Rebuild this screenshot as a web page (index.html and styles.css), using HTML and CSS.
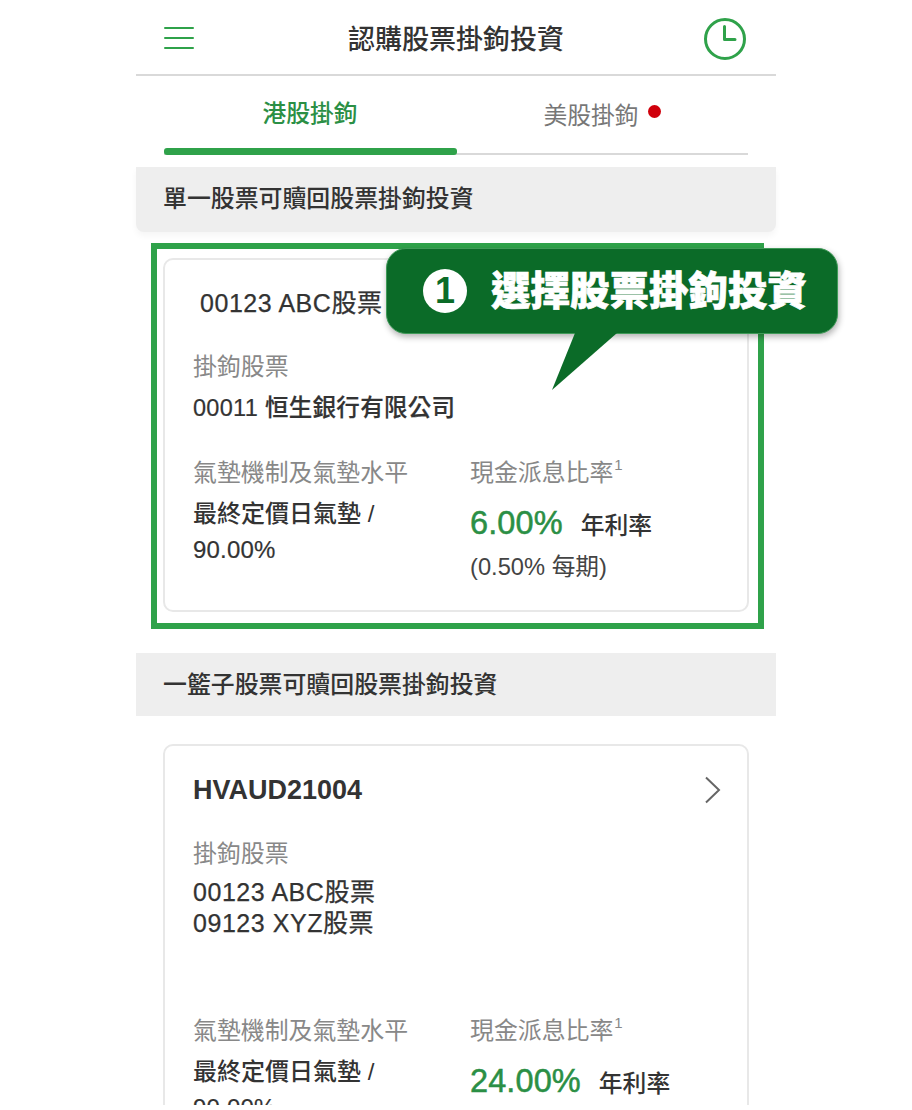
FILE: index.html
```html
<!DOCTYPE html>
<html lang="zh-Hant">
<head>
<meta charset="utf-8">
<title>認購股票掛鉤投資</title>
<link rel="stylesheet" href="styles.css">
</head>
<body>
<div class="viewport">
<div class="app">
  <header class="topbar">
    <div class="menu"><span></span><span></span><span></span></div>
    <h1 class="title">認購股票掛鉤投資</h1>
    <svg class="clock" width="44" height="44" viewBox="0 0 44 44" fill="none" stroke="#2fa24a" stroke-width="3"><circle cx="22" cy="22" r="19.500"/><path d="M21.500 9.500V22.500H32" stroke-linecap="round" stroke-linejoin="round"/></svg>
  </header>
  <nav class="tabs">
    <div class="tab active">港股掛鉤</div>
    <div class="tab"><span class="tab-text">美股掛鉤</span><i class="dot"></i></div>
  </nav>
  <div class="tabline"><div class="tabline-on"></div></div>

  <h2 class="section first">單一股票可贖回股票掛鉤投資</h2>
  <div class="frame">
    <article class="card">
      <div class="code inset">00123 ABC股票</div>
      <div class="label gap-a">掛鉤股票</div>
      <div class="value gap-b">00011 恒生銀行有限公司</div>
      <div class="row gap-c">
        <div class="col-l">
          <div class="label">氣墊機制及氣墊水平</div>
          <div class="kind">最終定價日氣墊 /<br><span class="plain">90.00%</span></div>
        </div>
        <div class="col-r">
          <div class="label">現金派息比率<sup>1</sup></div>
          <div class="rate"><b>6.00%</b><span>年利率</span></div>
          <div class="note">(0.50% 每期)</div>
        </div>
      </div>
    </article>
  </div>

  <h2 class="section">一籃子股票可贖回股票掛鉤投資</h2>
  <article class="card second">
    <div class="head">
      <div class="strong">HVAUD21004</div>
      <svg class="chev" width="18" height="28" viewBox="0 0 18 28" fill="none" stroke="#666" stroke-width="2"><path d="M2 1.500 15 14 2 26.500"/></svg>
    </div>
    <div class="label gap-a2">掛鉤股票</div>
    <div class="code gap-b2">00123 ABC股票<br>09123 XYZ股票</div>
    <div class="row gap-d">
      <div class="col-l">
        <div class="label">氣墊機制及氣墊水平</div>
        <div class="kind">最終定價日氣墊 /<br><span class="plain">90.00%</span></div>
      </div>
      <div class="col-r">
        <div class="label">現金派息比率<sup>1</sup></div>
        <div class="rate"><b>24.00%</b><span>年利率</span></div>
      </div>
    </div>
  </article>

  <aside class="callout">
    <span class="num">1</span>
    <span class="callout-text">選擇股票掛鉤投資</span>
    <svg class="tail" width="70" height="60" viewBox="0 0 70 60"><path d="M24 0H66L1 57Z" fill="#0b6b28"/></svg>
  </aside>
</div>
</div>
</body>
</html>
```
FILE: styles.css
```css
* { box-sizing: border-box; }
html, body { margin: 0; padding: 0; background: #fff; }
body {
  font-family: "Liberation Sans", "Noto Sans CJK TC", sans-serif;
  color: #333;
}
.viewport {
  height: 1105px;
  overflow: hidden;
  padding-left: 136px;
}
.app {
  position: relative;
  width: 640px;
  background: #fff;
}
.topbar {
  height: 76px;
  padding: 0 28px;
  display: grid;
  grid-template-columns: 1fr auto 1fr;
  align-items: center;
  border-bottom: 2px solid #d9d9d9;
}
.menu { width: 30px; height: 22px; display: flex; flex-direction: column; justify-content: space-between; margin-top: 1px; }
.menu span { display: block; height: 2px; background: #2fa24a; border-radius: 1px; }
.title {
  margin: 6px 0 0;
  font-size: 27px;
  line-height: 40px;
  font-weight: 500;
  color: #333;
}
.clock { justify-self: end; margin-right: 1px; margin-top: 3px; }
.tabs { display: flex; height: 72px; padding: 0 28px; }
.tab {
  flex: 1;
  display: flex;
  justify-content: center;
  padding-top: 20px;
  font-size: 23.800px;
  line-height: 36px;
  color: #777;
}
.tab.active { color: #2b8f45; font-weight: 500; }
.tab-text { margin-top: 2px; }
.dot { width: 13px; height: 13px; background: #d0000b; border-radius: 50%; margin: 9px 0 0 9px; }
.tabline { margin: 0 28px; height: 7px; position: relative; border-bottom: 2px solid #d9d9d9; }
.tabline-on { position: absolute; left: 0; top: 0; width: 293px; height: 7px; background: #2fa24a; border-radius: 3px; }
.section {
  margin: 0;
  height: 63px;
  padding: 15px 27px 0;
  background: #eee;
  font-size: 23.900px;
  line-height: 34px;
  font-weight: 500;
  color: #333;
}
.section.first { margin-top: 12px; height: 65px; box-shadow: 0 4px 6px rgba(0,0,0,.04); border-radius: 0 0 8px 8px; }
.frame {
  margin: 11px 12px 24px 15px;
  border: 6px solid #2fa24a;
  padding: 9px 9px 11px 6px;
}
.card {
  border: 2px solid #e8e8e8;
  border-radius: 10px;
  padding: 27px 25px 25px 28px;
  background: #fff;
}
.card.second { margin: 28px 27px 0; padding-top: 28px; }
.code { font-size: 25px; line-height: 31px; color: #333; letter-spacing: .55px; -webkit-text-stroke: .25px #333; }
.inset { padding-left: 7px; line-height: 32px; }
.strong { font-size: 27px; line-height: 32px; font-weight: 700; color: #333; }
.head { display: flex; justify-content: space-between; align-items: center; }
.label { font-size: 23.900px; line-height: 32px; color: #888; }
.label sup { font-size: 15px; line-height: 0; vertical-align: baseline; position: relative; top: -11px; margin-left: 1px; }
.value { font-size: 23.500px; line-height: 32px; color: #333; font-weight: 500; letter-spacing: .3px; -webkit-text-stroke: .2px #333; }
.gap-a { margin-top: 32px; }
.gap-b { margin-top: 9px; }
.gap-c { margin-top: 33px; }
.gap-a2 { margin-top: 32px; }
.gap-b2 { margin-top: 7px; }
.gap-d { margin-top: 76px; }
.row { display: flex; }
.col-l { width: 277px; flex: none; }
.col-r { flex: 1; }
.kind { margin-top: 7px; font-size: 24px; line-height: 36px; font-weight: 500; color: #333; }
.plain { -webkit-text-stroke: .2px #333; letter-spacing: .2px; }
.rate { margin-top: 14px; height: 40px; display: flex; align-items: center; }
.rate b { font-size: 32.500px; font-weight: 400; color: #2b8f45; -webkit-text-stroke: .5px #2b8f45; letter-spacing: .1px; }
.rate span { margin-left: 18px; font-size: 23.800px; font-weight: 500; color: #333; margin-top: 1px; }
.note { margin-top: 6px; font-size: 23.700px; line-height: 36px; color: #444; }
.callout {
  position: absolute;
  left: 250px;
  top: 248px;
  width: 452px;
  height: 86px;
  background: #0b6b28;
  border: 1px solid #3f9a58;
  border-radius: 20px;
  box-shadow: 1px 3px 6px rgba(0,0,0,.3);
  display: flex;
  align-items: center;
  padding-left: 36px;
  padding-bottom: 1px;
}
.num {
  width: 44px;
  height: 44px;
  background: #fff;
  color: #0b6b28;
  border-radius: 50%;
  font-size: 36px;
  font-weight: 700;
  line-height: 44px;
  text-align: center;
}
.callout-text {
  margin-left: 24px;
  font-size: 39.500px;
  line-height: 50px;
  font-weight: 900;
  color: #fff;
  white-space: nowrap;
  -webkit-text-stroke: .7px #fff;
}
.tail { position: absolute; left: 164px; top: 84px; }
```
